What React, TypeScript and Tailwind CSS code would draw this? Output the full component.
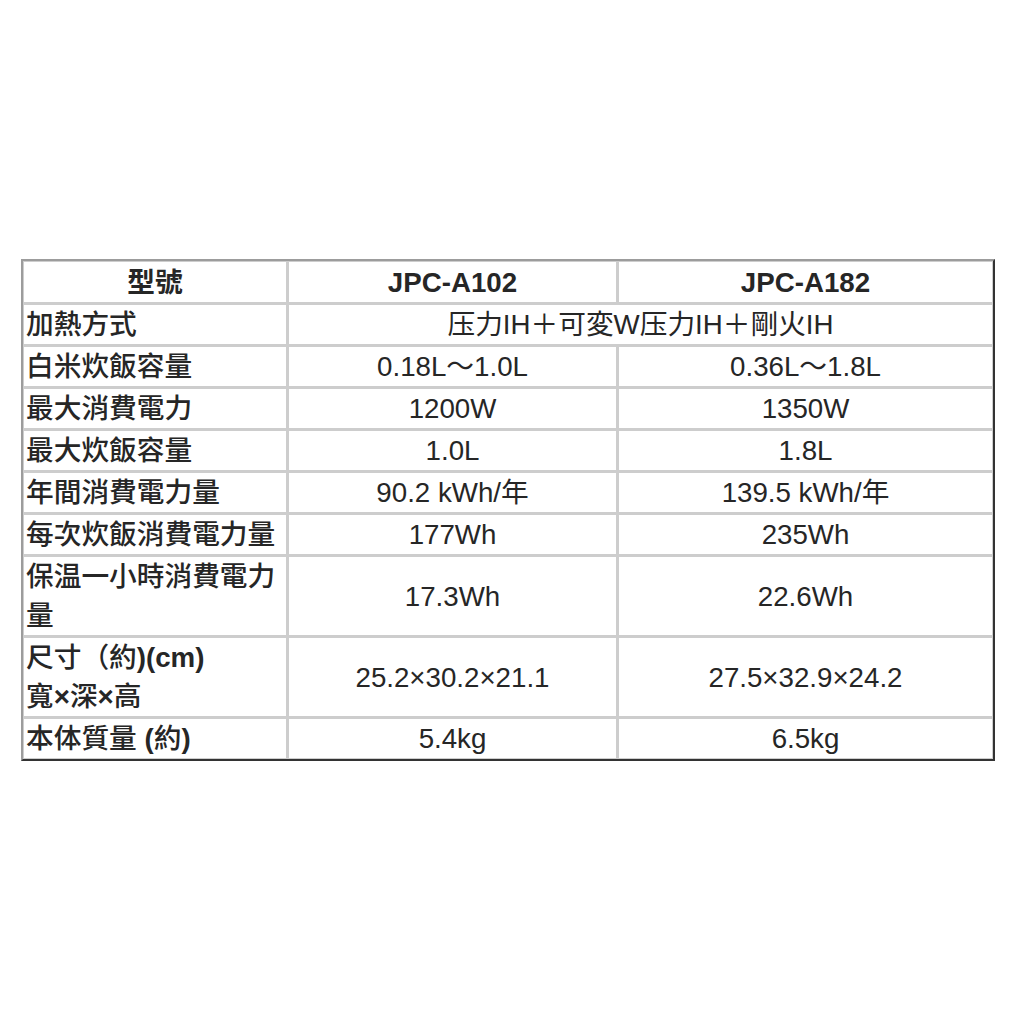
import React from "react";

const font = { fontFamily: '"Liberation Sans", "Noto Sans CJK TC", sans-serif' };

type Row = { label: React.ReactNode; a?: string; b?: string; span?: string; tall?: boolean };

const B = ({ children }: { children: React.ReactNode }) => <span className="font-bold">{children}</span>;

const rows: Row[] = [
  { label: "加熱方式", span: "压力IH＋可変W压力IH＋剛火IH" },
  { label: "白米炊飯容量", a: "0.18L～1.0L", b: "0.36L～1.8L" },
  { label: "最大消費電力", a: "1200W", b: "1350W" },
  { label: "最大炊飯容量", a: "1.0L", b: "1.8L" },
  { label: "年間消費電力量", a: "90.2 kWh/年", b: "139.5 kWh/年" },
  { label: "每次炊飯消費電力量", a: "177Wh", b: "235Wh" },
  { label: "保温一小時消費電力量", a: "17.3Wh", b: "22.6Wh", tall: true },
  {
    label: (
      <>
        尺寸（約<B>)(cm)</B>
        <br />
        寬<B>×</B>深<B>×</B>高
      </>
    ),
    a: "25.2×30.2×21.1",
    b: "27.5×32.9×24.2",
    tall: true,
  },
  {
    label: (
      <>
        本体質量<B> (</B>約<B>)</B>
      </>
    ),
    a: "5.4kg",
    b: "6.5kg",
  },
];

export default function App() {
  return (
    <div className="min-h-[1024px] bg-white pt-[259px] pl-[21px]" style={font}>
      <div className="inline-block border-2 border-t-[#9c9c9c] border-l-[#9c9c9c] border-r-[#333333] border-b-[#333333] bg-[#cdcdcd] p-px">
        <div className="grid grid-cols-[262px_327px_373px] gap-[3px] text-[27.7px] leading-[39px] text-[#262626]">
          <div className="bg-white h-[40px] flex items-center justify-center font-bold">型號</div>
          <div className="bg-white h-[40px] flex items-center justify-center font-bold">JPC-A102</div>
          <div className="bg-white h-[40px] flex items-center justify-center font-bold">JPC-A182</div>
          {rows.map((r, i) => (
            <React.Fragment key={i}>
              <div
                className={`bg-white pl-[2px] font-medium whitespace-normal ${r.tall ? "h-[78px]" : "h-[39px]"}`}
              >
                {r.label}
              </div>
              {r.span ? (
                <div className="bg-white col-span-2 h-[39px] flex items-center justify-center">
                  {r.span}
                </div>
              ) : (
                <>
                  <div
                    className={`bg-white flex items-center justify-center ${r.tall ? "h-[78px]" : "h-[39px]"}`}
                  >
                    {r.a}
                  </div>
                  <div
                    className={`bg-white flex items-center justify-center ${r.tall ? "h-[78px]" : "h-[39px]"}`}
                  >
                    {r.b}
                  </div>
                </>
              )}
            </React.Fragment>
          ))}
        </div>
      </div>
    </div>
  );
}
